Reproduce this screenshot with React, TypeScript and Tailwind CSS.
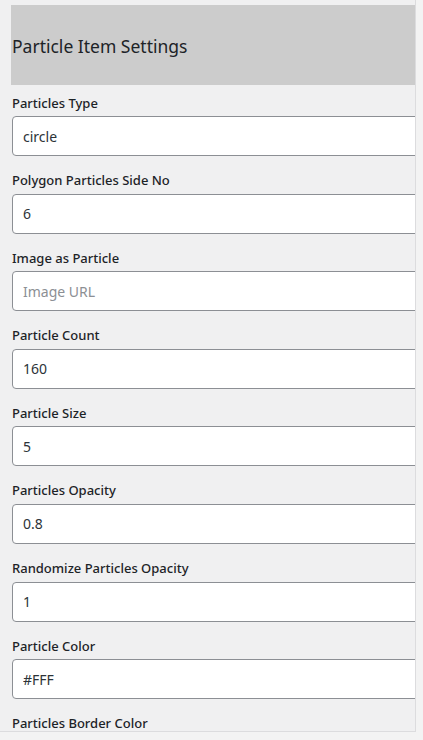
import React from "react";

const fields: { label: string; value?: string; placeholder?: string }[] = [
  { label: "Particles Type", value: "circle" },
  { label: "Polygon Particles Side No", value: "6" },
  { label: "Image as Particle", placeholder: "Image URL" },
  { label: "Particle Count", value: "160" },
  { label: "Particle Size", value: "5" },
  { label: "Particles Opacity", value: "0.8" },
  { label: "Randomize Particles Opacity", value: "1" },
  { label: "Particle Color", value: "#FFF" },
  { label: "Particles Border Color", value: "" },
];

export default function App() {
  return (
    <div
      className="min-h-screen bg-[#f3f3f3] text-[#1d2327]"
      style={{ fontFamily: '"Noto Sans", "Open Sans", Arial, sans-serif' }}
    >
      <div className="w-[416px] h-[732px] bg-[#f0f0f1] border-r border-b border-[#dcdcde] overflow-hidden pt-[5px] pl-[11px]">
        <div className="h-[80px] w-[404px] bg-[#cccccc] flex items-center pl-[1px] pt-[2px] text-[17.5px] text-[#1d2327]">
          Particle Item Settings
        </div>
        <div className="pt-[8.5px] flex flex-col gap-[15.1px] pl-[1px]">
          {fields.map((f) => (
            <div key={f.label} className="flex flex-col">
              <label className="text-[13px] leading-[19.5px] font-medium text-[#1d2327]">
                {f.label}
              </label>
              <input
                readOnly
                defaultValue={f.value}
                placeholder={f.placeholder}
                className="mt-[3px] h-[40px] w-[410px] shrink-0 rounded-[4px] border border-[#8c8f94] bg-white px-[10px] text-[14px] text-[#2c3338] placeholder:text-[#8c8f94] outline-none"
              />
            </div>
          ))}
        </div>
      </div>
    </div>
  );
}
